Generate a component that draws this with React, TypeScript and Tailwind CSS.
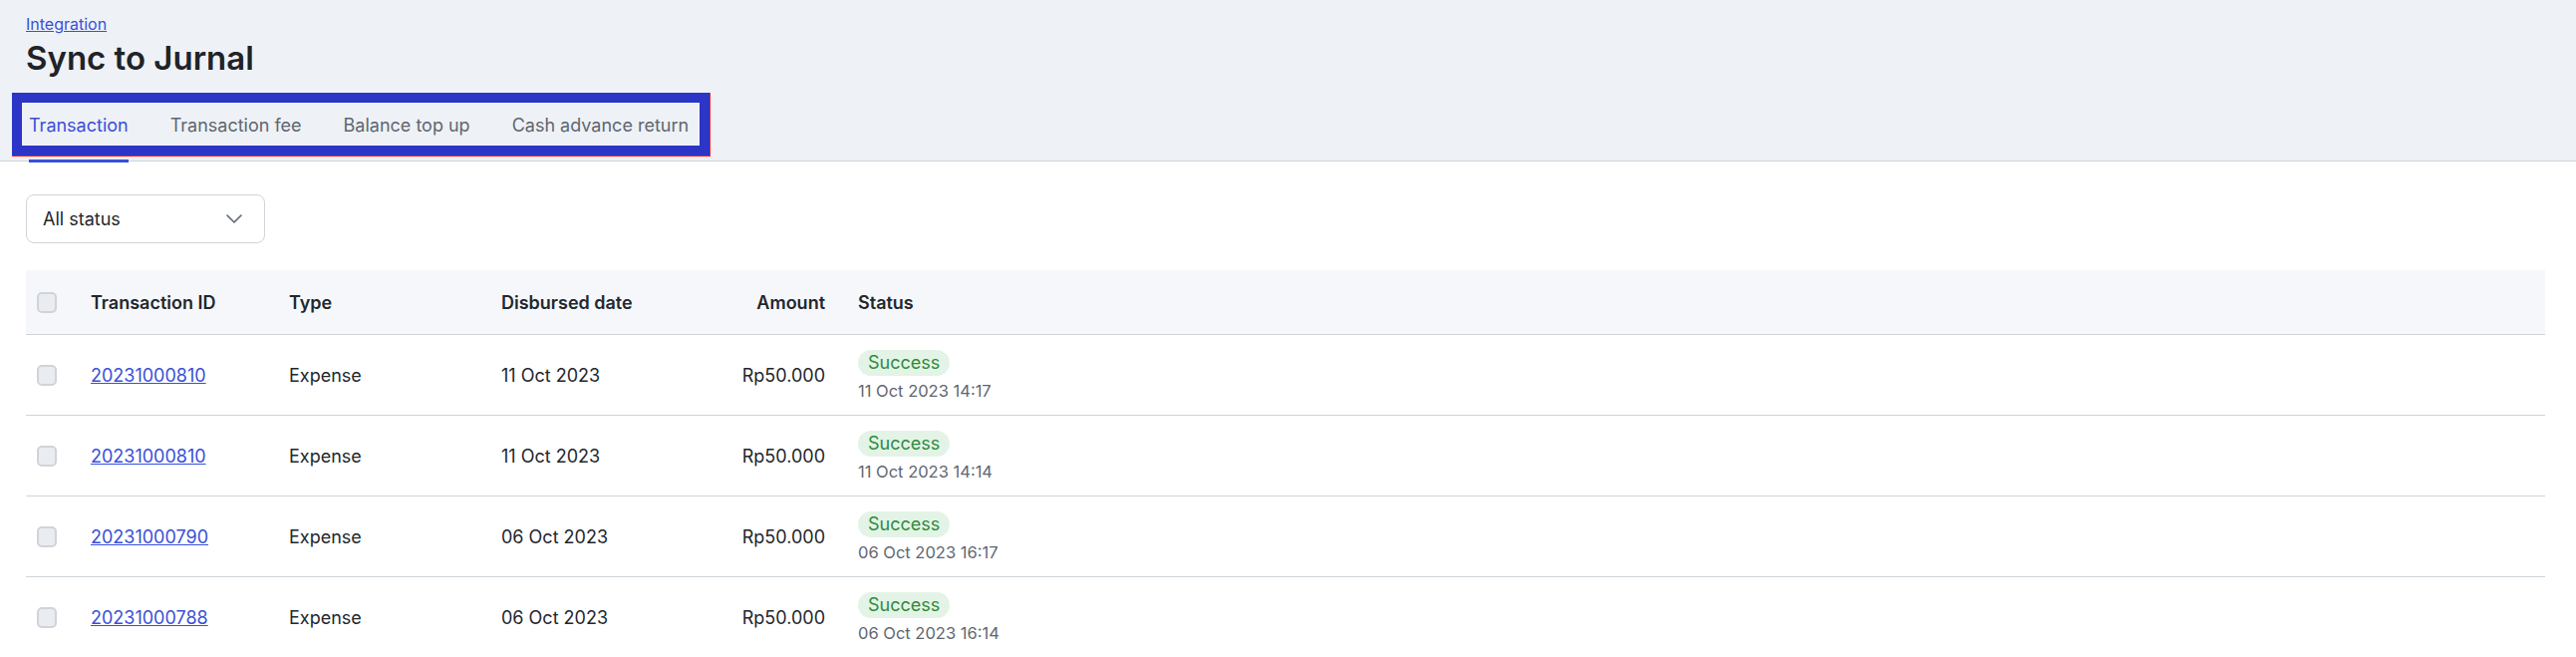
import React from "react";

type Row = {
  id: string;
  type: string;
  date: string;
  amount: string;
  syncedAt: string;
};

const rows: Row[] = [
  { id: "20231000810", type: "Expense", date: "11 Oct 2023", amount: "Rp50.000", syncedAt: "11 Oct 2023 14:17" },
  { id: "20231000810", type: "Expense", date: "11 Oct 2023", amount: "Rp50.000", syncedAt: "11 Oct 2023 14:14" },
  { id: "20231000790", type: "Expense", date: "06 Oct 2023", amount: "Rp50.000", syncedAt: "06 Oct 2023 16:17" },
  { id: "20231000788", type: "Expense", date: "06 Oct 2023", amount: "Rp50.000", syncedAt: "06 Oct 2023 16:14" },
];

const tabs = ["Transaction", "Transaction fee", "Balance top up", "Cash advance return"];

function Checkbox() {
  return (
    <span className="block w-[20px] h-[21px] rounded-[5px] border-2 border-[#cfd4da] bg-[#e9ecf0]" />
  );
}

function Chevron() {
  return (
    <svg width="16" height="9" viewBox="0 0 16 9" fill="none">
      <path d="M1 1l7 7 7-7" stroke="#5f6670" strokeWidth="1.6" strokeLinecap="round" strokeLinejoin="round" />
    </svg>
  );
}

export default function App() {
  return (
    <div className="min-h-[659px] bg-white text-[#23272e] font-['Inter','Liberation_Sans',sans-serif]">
      {/* Page header with breadcrumb, title and tabs */}
      <div className="relative bg-[#eef2f6] border-b border-[#cfd4da] pl-[26px]">
        <div className="pt-[12px] h-[34px]">
          <a href="#" className="text-[16px] leading-[18px] text-[#3a4fd8] underline">
            Integration
          </a>
        </div>
        <h1 className="mt-[5px] text-[33px] leading-[38px] font-semibold text-[#1f2328]">Sync to Jurnal</h1>
        <div className="mt-[32px] flex gap-[42px] pl-[3px]">
          {tabs.map((t, i) => (
            <div
              key={t}
              className={
                i === 0
                  ? "h-[54px] pb-[19px] flex items-center text-[18px] text-[#3a4fd8] border-b-[3px] border-[#3a4fd8] -mb-[2px]"
                  : "h-[54px] pb-[19px] flex items-center text-[18px] text-[#5f6670] -mb-[2px] border-b-[3px] border-transparent"
              }
            >
              {t}
            </div>
          ))}
        </div>
        {/* highlight frame around the tab strip */}
        <div className="absolute left-[12px] top-[93px] w-[701px] h-[64px] border-r border-b border-[#ff1a1a]">
          <div className="w-full h-full border-[10px] border-[#2c35c6]" />
        </div>
      </div>

      <div className="pl-[26px] pr-[31px] pt-[33px]">
        <div className="w-[240px] h-[49px] rounded-[8px] border border-[#d0d5db] bg-white flex items-center justify-between pl-[16px] pr-[22px]">
          <span className="text-[18px] text-[#23272e]">All status</span>
          <Chevron />
        </div>

        <div className="mt-[27px]">
          <div className="flex items-center h-[65px] bg-[#f6f7fa] border-b border-[#cfd4da] text-[18px] font-semibold">
            <div className="w-[65px] pl-[11px]">
              <Checkbox />
            </div>
            <div className="w-[199px]">Transaction ID</div>
            <div className="w-[213px]">Type</div>
            <div className="w-[200px]">Disbursed date</div>
            <div className="w-[125px] text-right">Amount</div>
            <div className="pl-[33px]">Status</div>
          </div>
          {rows.map((r, i) => (
            <div key={i} className="flex items-center h-[81px] border-b border-[#cfd4da] text-[18px]">
              <div className="w-[65px] pl-[11px]">
                <Checkbox />
              </div>
              <div className="w-[199px]">
                <a href="#" className="text-[#3a4fd8] underline">
                  {r.id}
                </a>
              </div>
              <div className="w-[213px]">{r.type}</div>
              <div className="w-[200px]">{r.date}</div>
              <div className="w-[125px] text-right">{r.amount}</div>
              <div className="pl-[33px] flex flex-col items-start">
                <span className="h-[26px] px-[10px] rounded-full bg-[#e3f4e6] text-[#2e8b3e] flex items-center text-[18px]">
                  Success
                </span>
                <span className="mt-[6px] text-[16.5px] leading-[19px] text-[#5f6670]">{r.syncedAt}</span>
              </div>
            </div>
          ))}
        </div>
      </div>
    </div>
  );
}
